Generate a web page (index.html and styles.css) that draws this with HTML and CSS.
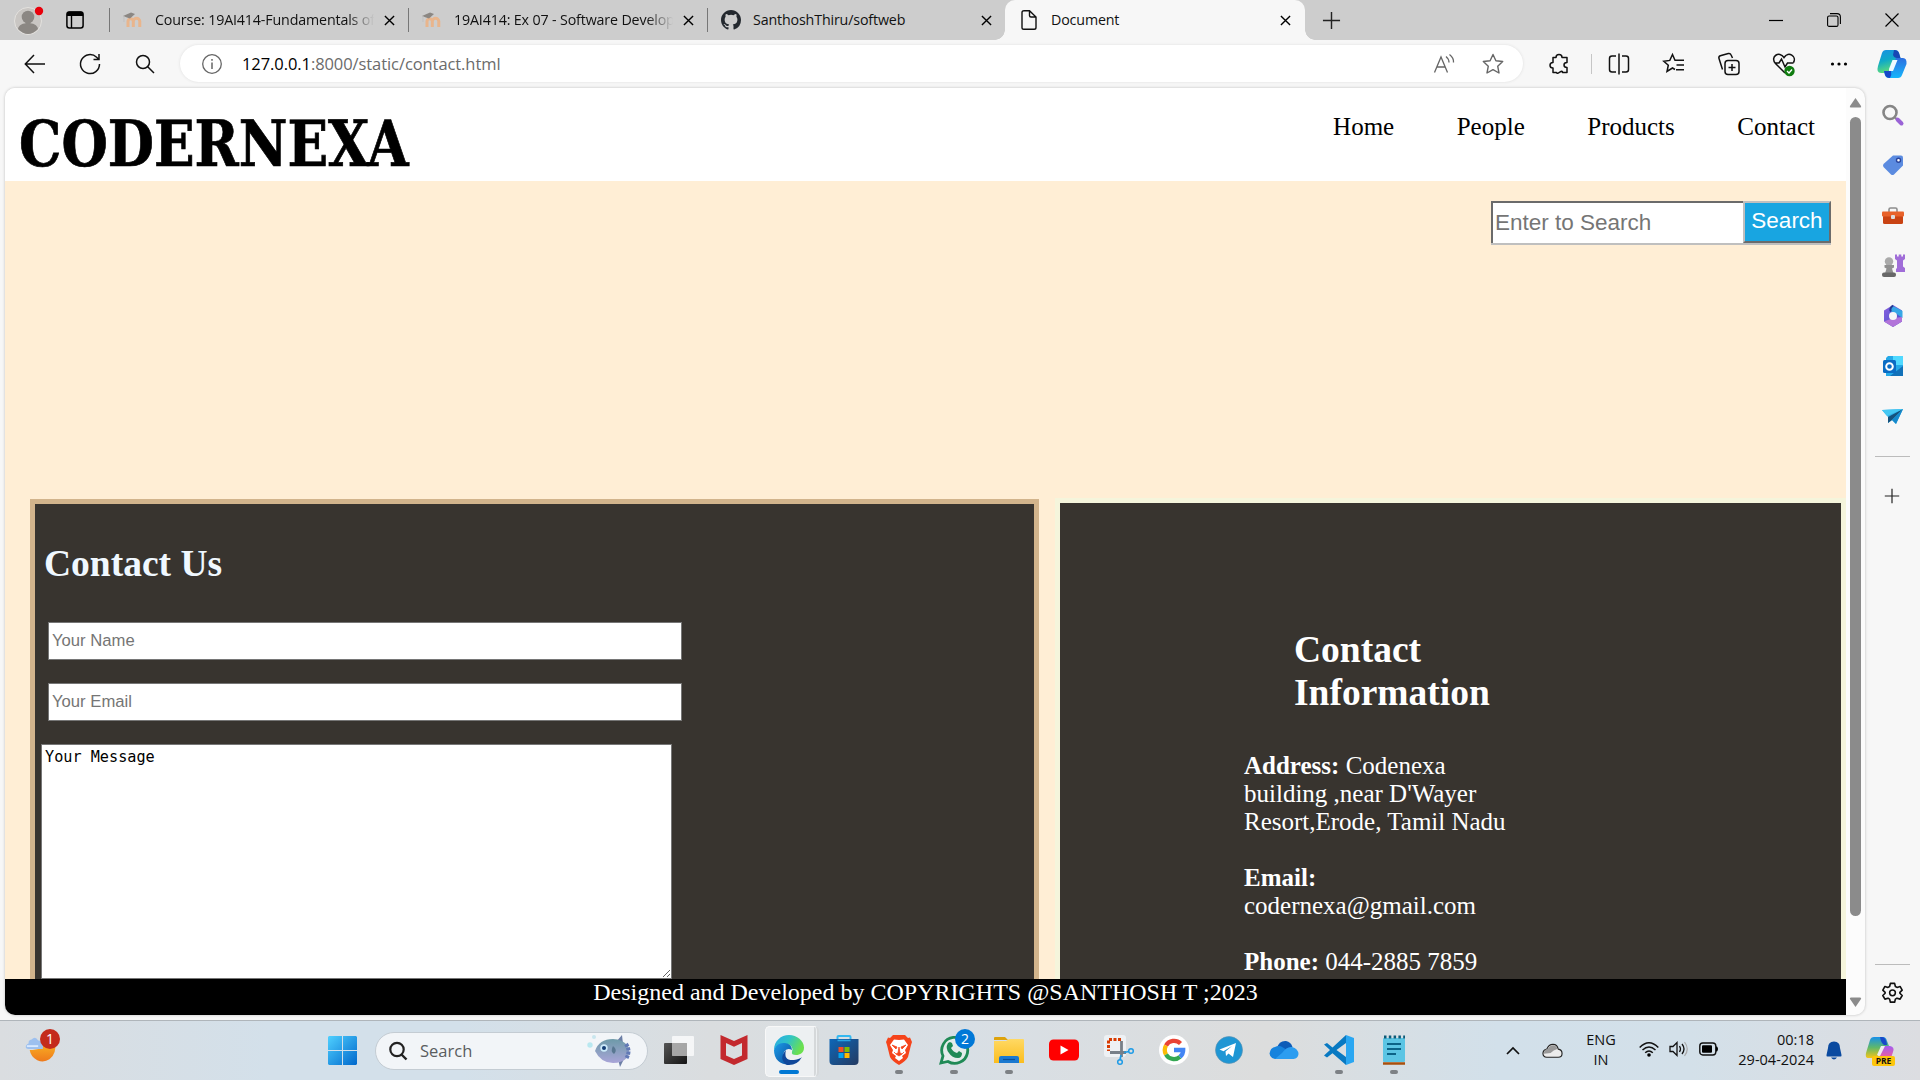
FILE: index.html
```html
<!DOCTYPE html>
<html lang="en">
<head>
<meta charset="utf-8">
<title>Document</title>
<link rel="stylesheet" href="styles.css">
</head>
<body>
<svg class="defs" width="0" height="0" aria-hidden="true">
  <defs>
    <linearGradient id="copilotA" x1="0" y1="0" x2=".3" y2="1"><stop offset="0" stop-color="#1a8fe3"/><stop offset=".5" stop-color="#0fa9c8"/><stop offset="1" stop-color="#5ddc7a"/></linearGradient>
    <linearGradient id="copilotB" x1="0" y1="0" x2="0" y2="1"><stop offset="0" stop-color="#2d6fe0"/><stop offset="1" stop-color="#16b6fb"/></linearGradient>
    <linearGradient id="win" x1="0" y1="0" x2="1" y2="1"><stop offset="0" stop-color="#4fd0ff"/><stop offset="1" stop-color="#0068cc"/></linearGradient>
    <linearGradient id="edgeTop" x1="0" y1="0" x2="1" y2=".4"><stop offset="0" stop-color="#2aa8e8"/><stop offset=".5" stop-color="#2fc3c8"/><stop offset="1" stop-color="#6be04f"/></linearGradient>
    <linearGradient id="edgeLow" x1="0" y1="0" x2="1" y2="1"><stop offset="0" stop-color="#1b9de8"/><stop offset="1" stop-color="#0c4a9c"/></linearGradient>
    <linearGradient id="store" x1="0" y1="0" x2="1" y2="1"><stop offset="0" stop-color="#0d67b8"/><stop offset="1" stop-color="#243a61"/></linearGradient>
    <linearGradient id="moon" x1="0" y1="0" x2="0" y2="1"><stop offset="0" stop-color="#fbb824"/><stop offset="1" stop-color="#ee7a1c"/></linearGradient>
    <linearGradient id="preA" x1="0" y1="0" x2="0" y2="1"><stop offset="0" stop-color="#1790ea"/><stop offset=".5" stop-color="#5fb86a"/><stop offset="1" stop-color="#f5c518"/></linearGradient>
    <linearGradient id="preB" x1="0" y1="0" x2="0" y2="1"><stop offset="0" stop-color="#a35cf0"/><stop offset="1" stop-color="#f0609a"/></linearGradient>
    <linearGradient id="fish" x1="0" y1="0" x2="0" y2="1"><stop offset="0" stop-color="#6d9aa8"/><stop offset="1" stop-color="#a9a5d8"/></linearGradient>
    <linearGradient id="folder" x1="0" y1="0" x2="0" y2="1"><stop offset="0" stop-color="#ffd964"/><stop offset="1" stop-color="#fbbd1e"/></linearGradient>
    <linearGradient id="dark" x1="0" y1="0" x2="1" y2="1"><stop offset="0" stop-color="#555"/><stop offset="1" stop-color="#151515"/></linearGradient>
    <linearGradient id="m365" x1="0" y1="0" x2="1" y2="1"><stop offset="0" stop-color="#8a5fe0"/><stop offset="1" stop-color="#3f53c8"/></linearGradient>
    <symbol id="x" viewBox="0 0 12 12"><path d="M1 1l10 10M11 1L1 11" fill="none" stroke="#000" stroke-width="1.5"/></symbol>
    <symbol id="moodle" viewBox="0 0 20 16"><path d="M5 15V9.500a2.600 2.600 0 0 1 5.300 0V15M10.300 15V9.500a3 3 0 0 1 6.500 0V15" fill="none" stroke="#e9b58c" stroke-width="3"/><path d="M0 4l8-3.500 4 1.500-5 4.500-3-1z" fill="#8b8783"/><path d="M1 4v6" stroke="#bbb" stroke-width=".7"/></symbol>
    <symbol id="plus" viewBox="0 0 20 20"><path d="M10 1v18M1 10h18" stroke="#222" stroke-width="1.500"/></symbol>
  </defs>
</svg>

<div class="tabstrip">
  <svg class="avatar" viewBox="0 0 32 32"><circle cx="14" cy="17" r="13.500" fill="#c9c6c3" stroke="#e4e2df"/><circle cx="14" cy="13" r="6.300" fill="#8b8783"/><path d="M4 25c1-8 19-8 20 0q-10 10-20 0" fill="#8b8783"/><circle cx="25" cy="7" r="4.200" fill="#e8000b"/></svg>
  <svg class="workspace" viewBox="0 0 18 18"><rect x=".9" y=".9" width="16.200" height="16.200" rx="2.500" fill="none" stroke="#000" stroke-width="1.500"/><path d="M1 2q0-1.500 2-1.500h12q2 0 2 1.500v3H1z"/><path d="M5.500 5v12" stroke="#000" stroke-width="1.400"/></svg>
  <div class="tab"><svg class="fav"><use href="#moodle"/></svg><span class="tab-title fade">Course: 19AI414-Fundamentals of</span><svg class="close"><use href="#x"/></svg></div>
  <div class="tab"><svg class="fav"><use href="#moodle"/></svg><span class="tab-title fade">19AI414: Ex 07 - Software Develop</span><svg class="close"><use href="#x"/></svg></div>
  <div class="tab"><svg class="fav" viewBox="0 0 16 16"><path fill="#24292f" d="M8 0C3.580 0 0 3.580 0 8c0 3.540 2.290 6.530 5.470 7.590.4.070.55-.17.55-.38 0-.19-.01-.82-.01-1.490-2.010.37-2.530-.49-2.690-.94-.09-.23-.48-.94-.82-1.130-.28-.15-.68-.52-.01-.53.63-.01 1.080.58 1.230.82.72 1.210 1.870.87 2.330.66.07-.52.28-.87.51-1.070-1.780-.2-3.640-.89-3.640-3.950 0-.87.31-1.590.82-2.150-.08-.2-.36-1.020.08-2.120 0 0 .67-.21 2.200.82a7.600 7.600 0 0 1 4 0c1.530-1.040 2.200-.82 2.200-.82.44 1.100.16 1.920.08 2.120.51.56.82 1.270.82 2.150 0 3.070-1.870 3.750-3.650 3.950.29.25.54.73.54 1.480 0 1.070-.01 1.930-.01 2.200 0 .21.15.46.55.38A8 8 0 0 0 16 8c0-4.420-3.580-8-8-8"/></svg><span class="tab-title">SanthoshThiru/softweb</span><svg class="close"><use href="#x"/></svg></div>
  <div class="tab active"><svg class="fav" viewBox="0 0 20 20"><path d="M4.500.7h6L17 7v10.500q0 1.800-1.800 1.800H4.800Q3 19.300 3 17.500v-15Q3 .7 4.800.7M10.500 1v4.500Q10.500 7 12 7h5" fill="none" stroke="#111" stroke-width="1.400"/></svg><span class="tab-title">Document</span><svg class="close"><use href="#x"/></svg></div>
  <svg class="newtab"><use href="#plus"/></svg>
  <div class="winctl">
    <svg viewBox="0 0 14 14"><path d="M0 7.500h14" stroke="#000" stroke-width="1.200"/></svg>
    <svg viewBox="0 0 14 14"><rect x=".6" y="3" width="10.400" height="10.400" rx="1.500" fill="none" stroke="#000" stroke-width="1.100"/><path d="M3 .6h7q3.400 0 3.400 3.400v7" fill="none" stroke="#000" stroke-width="1.100"/></svg>
    <svg viewBox="0 0 14 14"><path d="M.5.5l13 13M13.500.5l-13 13" stroke="#000" stroke-width="1.200"/></svg>
  </div>
</div>

<div class="toolbar">
  <div class="tools nav-tools">
    <svg viewBox="0 0 24 24"><path d="M22 12H2.500M11 3l-8.700 9 8.700 9" fill="none" stroke="#111" stroke-width="1.500"/></svg>
    <svg viewBox="0 0 24 24"><path d="M21.500 12A9.500 9.500 0 1 1 18.600 5.200L21 7.500M21 2v5.500h-5.500" fill="none" stroke="#111" stroke-width="1.500"/></svg>
    <svg viewBox="0 0 24 24"><circle cx="10" cy="10" r="6.500" fill="none" stroke="#111" stroke-width="1.500"/><path d="M14.700 14.700l6.300 6.300" stroke="#111" stroke-width="1.500"/></svg>
  </div>
  <div class="address">
    <svg class="ic" viewBox="0 0 24 24"><circle cx="12" cy="12" r="9.300" fill="none" stroke="#666" stroke-width="1.300"/><path d="M12 10.500v6.500M12 7v1.800" stroke="#666" stroke-width="1.500"/></svg>
    <span class="url"><b>127.0.0.1</b>:8000/static/contact.html</span>
    <svg class="ic" viewBox="0 0 24 24"><path d="M2.500 20.500L9 5l6.500 15.500M5 15h8M14 4.500q3 2.500 3 6M17.500 2.500q4.500 3.500 4 8" fill="none" stroke="#666" stroke-width="1.300"/></svg>
    <svg class="ic star" viewBox="0 0 24 24"><path d="M12 2.500l2.900 6.200 6.800.8-5 4.700 1.300 6.800-6-3.400L6 21l1.300-6.800-5-4.700 6.800-.8z" fill="none" stroke="#666" stroke-width="1.400" stroke-linejoin="round"/></svg>
  </div>
  <div class="tools ext">
    <svg viewBox="0 0 24 24"><path d="M8 5.500C8 1.500 14 1.500 14 5.500h5v5c-4 0-4 5 0 5v5h-4.500c0-4-5 3-6 0H5v-4.500C1 16 1 10.500 5 10.500v-5z" fill="none" stroke="#111" stroke-width="1.500" stroke-linejoin="round"/></svg>
    <i class="vline"></i>
    <svg viewBox="0 0 24 24"><path d="M9 4H5Q2.500 4 2.500 6.500v11Q2.500 20 5 20h4M15 4h4q2.500 0 2.500 2.500v11Q21.500 20 19 20h-4M12 1.500v21" fill="none" stroke="#111" stroke-width="1.500"/></svg>
    <svg viewBox="0 0 24 24"><path d="M13 17.500L10.500 16 5 19.500l1.300-6.300-4.500-4 6-.8L10.500 2.500 13 8.300h9M14.500 13H22M14 17.700h8" fill="none" stroke="#111" stroke-width="1.500"/></svg>
    <svg viewBox="0 0 24 24"><rect x="8" y="8.500" width="14" height="14" rx="3" fill="none" stroke="#111" stroke-width="1.500"/><path d="M15 12v7M11.500 15.500h7M5.500 17.500L2 6.500q-.7-2 1.300-2.700l8-2.300q2-.5 2.700 1.300L15.500 6" fill="none" stroke="#111" stroke-width="1.500"/></svg>
    <svg viewBox="0 0 24 24"><path d="M12 20L3.500 11.500c-6-7 4-13 8.500-6 4.500-7 13-1 9.500 5M3 11h4l2.500-4 3.500 8 2.500-4h6M12 20l1 1" fill="none" stroke="#111" stroke-width="1.500"/><circle cx="17.500" cy="19" r="5.200" fill="#107c10"/><path d="M15 19l2 2 3-3.500" stroke="#fff" fill="none" stroke-width="1.300"/></svg>
    <svg viewBox="0 0 24 24"><circle cx="5.500" cy="12" r="1.600"/><circle cx="12" cy="12" r="1.600"/><circle cx="18.500" cy="12" r="1.600"/></svg>
    <svg class="copilot" viewBox="0 0 30 30"><path d="M9 1h9q3 0 4 3l2 7h-6l-6 13H4Q-1 24 1 17L5 4q1-3 4-3" fill="url(#copilotA)"/><path d="M17 1q4 0 5 3l1.500 5H20q-3 0-4-3z" fill="#1748b5"/><path d="M21 29h-9q-3 0-4-3l-1-4h6l6-13h7q4 0 3.500 6L25 26q-1 3-4 3" fill="url(#copilotB)"/><path d="M7 22h7q1 4-1 7-4 0-5-3z" fill="#1748c8"/><path d="M12 20l3.500-9h5L16 22h-4z" fill="#eefaff"/></svg>
  </div>
</div>

<div class="middle">
  <div class="viewport">
    <div class="page">
      <header class="site-head">
        <h1>CODERNEXA</h1>
        <nav><a>Home</a><a>People</a><a>Products</a><a>Contact</a></nav>
      </header>
      <main>
        <div class="search-row"><div class="search-box"><input class="search-input" type="text" placeholder="Enter to Search"><button class="search-btn">Search</button></div></div>
        <div class="panels">
          <section class="form-panel">
            <h2>Contact Us</h2>
            <input class="field" type="text" placeholder="Your Name">
            <input class="field" type="text" placeholder="Your Email">
            <textarea class="message">Your Message</textarea>
          </section>
          <section class="info-panel">
            <h2>Contact<br>Information</h2>
            <p><strong>Address:</strong> Codenexa<br>building ,near D'Wayer<br>Resort,Erode, Tamil Nadu</p>
            <p><strong>Email:</strong><br>codernexa@gmail.com</p>
            <p><strong>Phone:</strong> 044-2885 7859</p>
          </section>
        </div>
      </main>
      <footer>Designed and Developed by COPYRIGHTS @SANTHOSH T ;2023</footer>
    </div>
    <div class="scrollbar">
      <svg width="13" height="10" viewBox="0 0 13 10"><path d="M6.500 0L12 8q.8 1.500-1 1.500H2Q.2 9.500 1 8z" fill="#8b8b8b"/></svg>
      <div class="thumb"></div>
      <svg width="13" height="10" viewBox="0 0 13 10"><path d="M6.500 10L12 2q.8-1.500-1-1.500H2Q.2.500 1 2z" fill="#8b8b8b"/></svg>
    </div>
  </div>
  <aside class="sidebar">
    <svg viewBox="0 0 24 24"><circle cx="9" cy="9.500" r="6.500" fill="none" stroke="#858585" stroke-width="2.600"/><path d="M14 14.500l2 2" stroke="#888" stroke-width="2"/><path d="M16.500 16.500l4 4" stroke="#9a63d6" stroke-width="4" stroke-linecap="round"/></svg>
    <svg viewBox="0 0 24 24"><path d="M12 2.500h8q2 0 2 2v8L13 21.500q-1.500 1.200-3 0L2.500 14q-1-1.500 0-3z" fill="#5b8be0"/><circle cx="17.500" cy="7.300" r="2" fill="#fff" stroke="#29449c" stroke-width="1.400"/></svg>
    <svg viewBox="0 0 24 24"><path d="M8 9V6.500Q8 5 9.500 5h5Q16 5 16 6.500V9" fill="none" stroke="#8d8d8d" stroke-width="1.600"/><rect x="2" y="12" width="20" height="9" rx="1.500" fill="#c94313"/><rect x="1" y="8.500" width="22" height="5" rx="1" fill="#e8622a"/><rect x="10" y="12" width="4" height="4" rx="1" fill="#ddd"/></svg>
    <svg viewBox="0 0 24 24"><path d="M14 .5h2v2h1.700v-2h2.600v2H22v-2h2v4.500l-2 1.500v6l2 1.500V18h-9v-3l1-1V6.500L14 5z" fill="#a06dd8"/><circle cx="8" cy="7.500" r="4.200" fill="#aaa"/><path d="M3.500 11h9.500v2.500l-2 1 1.500 5H4l1.500-5-2-1z" fill="#909090"/><rect x="1" y="18.500" width="14" height="4.500" rx="2" fill="#686868"/></svg>
    <svg viewBox="0 0 24 24"><path d="M12 1l9 5.500v11L12 23l-9-5.500v-11z" fill="url(#m365)"/><path d="M11 1.500L21.500 7v7L15 9.500 9 7z" fill="#37a7e6"/><path d="M3 17.500L12 14l9-1v4.500L12 23z" fill="#b274d9"/><path d="M12 1.500q-4 3.500-2 6" stroke="#253b91" stroke-width="2" fill="none"/><circle cx="12" cy="12" r="4" fill="#f7f7f7"/></svg>
    <svg viewBox="0 0 24 24"><path d="M7 2h13q2 0 2 2v18H5V4z" fill="#24a9e8"/><path d="M12 2h10v9H12z" fill="#50d9ff"/><path d="M22 12v10H9z" fill="#1271b8"/><rect x="2" y="6" width="13" height="13" rx="1.500" fill="#0a6cc4"/><circle cx="8.500" cy="12.500" r="3.300" fill="none" stroke="#fff" stroke-width="2"/></svg>
    <svg viewBox="0 0 24 24"><path d="M1 6l21-1-7 15-4-4-4 3v-6z" fill="#2caee8"/><path d="M22 5L7 13v6l4-3z" fill="#15527d"/><path d="M22 5L11 16l4 4z" fill="#1689cc"/><path d="M1 6l21-1L6 12z" fill="#45c8f3"/></svg>
    <i class="hline"></i>
    <svg class="side-plus" viewBox="0 0 20 20"><use href="#plus"/></svg>
    <div class="side-bottom"><i class="hline"></i>
    <svg class="gear" viewBox="0 0 24 24"><path d="M9.800 2.500h4.400l.8 3.200 1.700 1 3.200-1 2.200 3.800-2.400 2.300v1l2.400 2.300-2.200 3.800-3.200-1-1.700 1-.8 3.200H9.800L9 18.900l-1.700-1-3.200 1-2.200-3.800 2.400-2.300v-1L1.900 9.500l2.200-3.800 3.200 1 1.700-1z" fill="none" stroke="#111" stroke-width="1.700" stroke-linejoin="round"/><circle cx="12" cy="12.300" r="3" fill="none" stroke="#111" stroke-width="1.600"/></svg></div>
  </aside>
</div>

<div class="taskbar">
  <div class="weather"><svg viewBox="0 0 34 34"><path d="M5 19q8 1 14-3V9h13q2 14-6 20-6 4-13 1-7-4-8-11" fill="url(#moon)"/><path d="M4 18h15v-5q-1-4-5-4Q11 4 7 8 3 9 4 12q-4 2-3 5 1 1 3 1" fill="#9dc0ef"/><path d="M2 15h12" stroke="#d9e9ff" stroke-width="2"/></svg><span class="badge red">1</span></div>
  <svg class="start" viewBox="0 0 29 29"><path d="M1 0h13v14H0V1zM15 0h13l1 1v13H15zM0 15h14v14H1l-1-1zM15 15h14v13l-1 1H15z" fill="url(#win)"/></svg>
  <div class="tb-search">
    <svg viewBox="0 0 20 20"><circle cx="9" cy="8.500" r="6.700" fill="none" stroke="#222" stroke-width="2.200"/><path d="M13.500 13.500l5 5" stroke="#222" stroke-width="2.400"/></svg>
    <span>Search</span>
    <svg class="fish" viewBox="0 0 44 34"><path d="M29 8l6-7 1 9zM31 25l2 8 4-8z" fill="#6c7fa6"/><path d="M8 17q4-12 18-12 9 0 15 7 2 5 0 11-6 6-15 6-12 0-18-12" fill="url(#fish)"/><path d="M39 10q5 7 0 15" stroke="#6279b5" stroke-width="4" fill="none" stroke-dasharray="3 1"/><circle cx="17" cy="14" r="3.700" fill="#cceafa"/><circle cx="17" cy="14" r="2" fill="#143d73"/><path d="M26 12q-3 5 1 8 4-4-1-8" fill="#587791"/><circle cx="3" cy="11" r="2.700" fill="#b9e8f0"/><circle cx="7" cy="3" r="2" fill="#c9e6ee"/></svg>
  </div>
  <div class="apps">
    <div class="app"><svg viewBox="0 0 30 30"><rect x="0" y="8" width="23" height="21" rx="1" fill="url(#dark)"/><rect x="8" y="1" width="22" height="20" rx="1" fill="#fff" opacity=".72"/><rect x="8" y="8" width="15" height="13" fill="#999" opacity=".7"/></svg></div>
    <div class="app"><svg viewBox="0 0 30 30"><path d="M1.500 0L15 6 28.500 0v24L15 30 1.500 24zM7 8v12.500l8 3.500 8-3.500V8l-8 3.800z" fill="#c3292e" fill-rule="evenodd"/></svg></div>
    <div class="app current"><svg viewBox="0 0 30 30"><path d="M0 15C0 6 7 0 15 0s15 6 15 12.500C30 18 26 20 22 20q-5 0-4-3Q20 9 11 9 3 9 0 15" fill="url(#edgeTop)"/><path d="M0 15q3-8 11-7 7 1 7 7-5-3-8 2-3 8 6 12.900Q0 29 0 15" fill="url(#edgeLow)"/><path d="M12 15q-3 11 8 10 6-1 8-3-5 9-15 8-9-6-1-15" fill="#10489a"/></svg><i></i></div>
    <div class="app"><svg viewBox="0 0 30 30"><path d="M8.500 6V2q0-1 1-1h11q1 0 1 1v4" fill="none" stroke="#34b8f0" stroke-width="2"/><path d="M.5 4h29v22q0 4-4 4h-21q-4 0-4-4z" fill="url(#store)"/><path d="M8.500 5.500h13" stroke="#26a4e4" stroke-width="1.500"/><path fill="#f25022" d="M9.500 12h5v5h-5z"/><path fill="#7fba00" d="M15.500 12h5v5h-5z"/><path fill="#00a4ef" d="M9.500 18h5v5h-5z"/><path fill="#ffb900" d="M15.500 18h5v5h-5z"/></svg></div>
    <div class="app"><svg viewBox="0 0 30 30"><path d="M9 0h12l3 3 2-.5L28 7l-1 3-3 12q-2 4-9 8-7-4-9-8L3 10 2 7l2-4.500L6 3z" fill="#f5441b"/><path d="M15 5l5-.5 4 5.500-3 5 1 3-4 3 1 2-4 3-4-3 1-2-4-3 1-3-3-5 4-5.500z" fill="#fff"/><path d="M8 10l5 2-1 2zM22 10l-5 2 1 2zM15 12l1 6 2 1-3 2-3-2 2-1zM10 17l2 2M20 17l-2 2" fill="#f5441b" stroke="#f5441b" stroke-width=".8"/></svg><i></i></div>
    <div class="app"><svg viewBox="0 0 30 30"><path d="M2 28l2-7A13 13 0 1 1 9 26.500z" fill="#e3eceb" stroke="#1f8a56" stroke-width="2.800"/><path d="M9 8l2-1 2 1 1 3-2 2q2 4 6 5l2-2 3 2q0 5-4 5-6 0-9-5-4-5-1-10" fill="#1f8a56"/></svg><span class="badge blue">2</span><i></i></div>
    <div class="app"><svg viewBox="0 0 30 30"><path d="M0 3q0-1 1-1h10l3 3H0z" fill="#dda20c"/><path d="M0 6h12l3-2h14q1 0 1 1v23H0z" fill="url(#folder)"/><path d="M5 28v-5q0-2 2-2h16q2 0 2 2v5z" fill="#1b79d0"/><path d="M9 24.500h12" stroke="#0b4f98" stroke-width="1.200"/></svg><i></i></div>
    <div class="app"><svg viewBox="0 0 30 30"><rect x="0" y="4.500" width="30" height="21" rx="4.500" fill="#f00"/><path d="M11.500 10.500v9l8-4.500z" fill="#fff"/></svg></div>
    <div class="app"><svg viewBox="0 0 30 30"><rect width="22" height="22" rx="3" fill="#eef1f4"/><path d="M17 4.500H4.500V16" fill="none" stroke="#d83b01" stroke-width="3" stroke-dasharray="3 1.500"/><path d="M17.500 6v16M6 17.500h16" stroke="#777f88" stroke-width="2.800"/><circle cx="27" cy="16" r="2.300" fill="none" stroke="#1e9be6" stroke-width="1.500"/><circle cx="16" cy="27" r="2.300" fill="none" stroke="#1e9be6" stroke-width="1.500"/><path d="M20 17.500l5-1M17 20l-1 5" stroke="#1e9be6" stroke-width="1.700"/></svg></div>
    <div class="app"><svg viewBox="0 0 30 30"><circle cx="15" cy="15" r="15" fill="#fff"/><g fill="none" stroke-width="4.300"><path d="M7 10.500A9.200 9.200 0 0 1 21.500 8.500" stroke="#ea4335"/><path d="M7 10.500a9.200 9.200 0 0 0 0 9" stroke="#fbbc05"/><path d="M7 19.500a9.200 9.200 0 0 0 14 2.300" stroke="#34a853"/><path d="M15 15h9.200q0 4.200-3.200 6.800" stroke="#4285f4"/></g></svg></div>
    <div class="app"><svg viewBox="0 0 30 30"><circle cx="15" cy="15" r="13.500" fill="#1e96d4" stroke="#5a8fae" stroke-width=".6"/><path d="M5.500 14.500L22 8l-3 14-4.500-3.500L12 21l-.5-4.500L18 11l-8.500 5.300z" fill="#fff"/></svg></div>
    <div class="app"><svg viewBox="0 0 30 30"><path d="M8 13q2-7.500 9-7 5 1 6.500 6l-5 5z" fill="#0d5cb8"/><path d="M6 24q-5-1-5.500-5.500Q1 13 6 12q4-2 8 .5l7 4.500-10 7z" fill="#1683dd"/><path d="M13 18q5-7 10-6 6 1.500 6.500 7-.5 4.500-5 5H6z" fill="#2c9df0"/></svg></div>
    <div class="app"><svg viewBox="0 0 30 30"><path d="M22 0L8.500 12.500 3 8 0 9.500 6 15 0 20.500 3 22.500l5.500-4.300L22 30V22L12.500 15 22 8z" fill="#0879c2"/><path d="M22 0l8 3v24l-8 3z" fill="#2aa7f2"/></svg><i></i></div>
    <div class="app"><svg viewBox="0 0 30 30"><rect x="4" y="3" width="22" height="24" rx="1" fill="#5cc5e4"/><path d="M5 2h21" stroke="#0b5a78" stroke-width="3" stroke-dasharray="2.500 2.300"/><path d="M8 9h14M8 14h14M8 19h9" stroke="#0c6387" stroke-width="1.800"/><path d="M4 28.500h22" stroke="#a8500e" stroke-width="2.500"/></svg><i></i></div>
  </div>
  <div class="tray">
    <svg class="chev" viewBox="0 0 14 14"><path d="M1 10l6-6 6 6" fill="none" stroke="#111" stroke-width="1.700"/></svg>
    <svg class="cloud" viewBox="0 0 22 16"><path d="M5 14.500q-4-.5-4-4T5 6q2-5 6.500-5Q16 1 17 6q4 .5 4 4.500T17 14.500z" fill="#ececec" stroke="#222" stroke-width="1.200"/><path d="M2 11q0-5 4-5 2-4 6-4 4 1 4 4-4 1-7 4z" fill="#999"/></svg>
    <div class="lang">ENG<br>IN</div>
    <svg class="wifi" viewBox="0 0 20 16"><g fill="none" stroke="#111" stroke-width="1.500"><path d="M.7 6.500q9.300-9.500 18.600 0M3.500 9q6.500-6 13 0M6.200 11.800q3.800-3.500 7.600 0"/></g><circle cx="10" cy="14" r="1.800"/></svg>
    <svg class="vol" viewBox="0 0 20 16"><path d="M1 5.500h3l4-4v13l-4-4H1z" fill="none" stroke="#111" stroke-width="1.300"/><path d="M10.500 5q2 3 0 6M13 3q4 5 0 10" fill="none" stroke="#111" stroke-width="1.300"/><path d="M15.500 1q5.500 7 0 14" fill="none" stroke="#aaa" stroke-width="1.200"/></svg>
    <svg class="bat" viewBox="0 0 20 14"><rect x=".8" y="1" width="16" height="12" rx="3" fill="none" stroke="#111" stroke-width="1.400"/><rect x="3" y="3.200" width="10" height="7.600" rx="1"/><path d="M17 4.500h1q2 2.500 0 5h-1z"/></svg>
    <div class="clock">00:18<br>29-04-2024</div>
    <svg class="bell" viewBox="0 0 16 20"><path d="M8 .5q6 0 6 6.500l1.500 7q.3 1.500-1 1.500h-13q-1.300 0-1-1.500L2 7Q2 .5 8 .5M5 16.500h6q-3 4-6 0" fill="#0a4aa0"/></svg>
    <svg class="pre" viewBox="0 0 30 30"><path d="M9 1h9q3 0 4 4l2 5-8 1-4 11H3q-3 0-2-5L5 4q1-3 4-3" fill="url(#preA)"/><path d="M17 1q4 0 5 8h-3q-3-2-4-8z" fill="#1849c9"/><path d="M14 21l5-11h6q5 1 3 6l-2 6H13z" fill="url(#preB)"/><path d="M12 19l4-9h4l-5 10z" fill="#eee"/><rect x="7" y="20" width="23" height="10" rx="2" fill="#fdc60c"/><text x="18.500" y="28.100" text-anchor="middle" class="pre-label">PRE</text></svg>
  </div>
</div>
</body>
</html>
```
FILE: styles.css
```css
* { box-sizing: border-box; }
body { margin: 0; width: 1920px; height: 1080px; overflow: hidden; display: flex; flex-direction: column; background: #f7f7f7; font-family: "Open Sans", "Noto Sans", sans-serif; color: #111; }
svg { display: block; flex: none; overflow: visible; }
.defs { position: absolute; }

/* Tab strip */
.tabstrip { height: 40px; flex: none; display: flex; align-items: center; background: #cdcdcd; padding-left: 14px; }
.avatar { width: 32px; height: 32px; margin-top: -1px; }
.workspace { width: 18px; height: 18px; margin: 0 25px 0 20px; }
.tab { width: 299px; height: 40px; flex: none; display: flex; align-items: center; padding: 0 13px 1px 14px; background: linear-gradient(#777, #777) 0 8px / 1px 24px no-repeat; }
.tab:nth-of-type(3) { width: 298px; }
.fav { width: 20px; height: 20px; margin-right: 12px; }
.tab-title { flex: 1; font-size: 14.250px; letter-spacing: -.15px; line-height: 20px; white-space: nowrap; overflow: hidden; color: #111; }
.fade { -webkit-mask-image: linear-gradient(to right, #000 88%, transparent); mask-image: linear-gradient(to right, #000 88%, transparent); }
.close { width: 11px; height: 11px; margin: 2px 0 0 10px; }
.active { width: 300px; background: #f7f7f7; border-radius: 10px 10px 0 0; padding-left: 14px; padding-right: 14px; position: relative; }
.active::before, .active::after { content: ""; position: absolute; bottom: 0; width: 10px; height: 10px; }
.active::before { left: -10px; background: radial-gradient(circle at 0 0, transparent 9.500px, #f7f7f7 10px); }
.active::after { right: -10px; background: radial-gradient(circle at 100% 0, transparent 9.500px, #f7f7f7 10px); }
.newtab { width: 19px; height: 19px; margin-left: 17px; }
.winctl { margin-left: auto; display: flex; gap: 44px; padding-right: 21px; }
.winctl svg { width: 14px; height: 14px; }

/* Toolbar */
.toolbar { height: 47px; margin-bottom: 1px; flex: none; display: flex; align-items: center; padding-left: 23px; }
.tools { display: flex; align-items: center; }
.tools svg { width: 24px; height: 24px; }
.nav-tools { gap: 31px; }
.address { width: 1343px; height: 37px; margin-left: 23px; border-radius: 19px; background: #fff; display: flex; align-items: center; padding: 0 18px 0 20px; box-shadow: 0 0 3px #ddd; }
.ic { width: 24px; height: 24px; }
.star { margin-left: 25px; }
.url { flex: 1; margin: -1px 0 0 18px; font-size: 16.500px; letter-spacing: -.08px; color: #6b6b6b; }
.url b { font-weight: 400; color: #000; }
.ext { padding-left: 25px; gap: 31px; }
.vline { width: 1px; height: 20px; background: #c6c6c6; margin: 0 -16px 0 -12px; }
.tools .copilot { width: 30px; height: 30px; margin-left: -5px; }

/* Browser body */
.middle { height: 932px; flex: none; display: flex; }
.viewport { width: 1860px; height: 927px; margin-left: 5px; border-radius: 10px; overflow: hidden; display: flex; background: #fcfcfc; box-shadow: 0 0 3px #bbb; }
.page { width: 1841px; height: 927px; display: flex; flex-direction: column; font-family: "Liberation Serif", serif; font-size: 25px; line-height: 28px; color: #000; }
.scrollbar { width: 19px; display: flex; flex-direction: column; align-items: center; padding: 10px 0 8px; }
.thumb { width: 11px; height: 799px; margin: 9px 0 auto; border-radius: 6px; background: #8b8b8b; }
.site-head { height: 93px; flex: none; display: flex; justify-content: space-between; background: #fff; padding: 25px 31px 0 14px; }
.site-head h1 { margin: -1px 0 0; font: bold 64px/64px "DejaVu Serif Condensed", "DejaVu Serif", serif; font-stretch: condensed; transform-origin: 0 0; transform: scaleX(.925); height: 60px; -webkit-text-stroke: .7px #000; }
.site-head nav { display: flex; gap: 62.500px; }
main { flex: 1; min-height: 0; overflow: hidden; background: #ffeed5; }
.search-row { height: 317px; display: flex; justify-content: flex-end; align-items: flex-start; padding: 20px 15px 0 0; }
.search-box { width: 340px; height: 44px; display: flex; align-items: flex-start; background: #fff; border-bottom: 2px solid #bfbfbf; }
.search-input { width: 252px; height: 42px; border: solid #6b6b6b; border-width: 2px 0 0 2px; border-radius: 0; margin: 0; padding: 0 3px 1px 2px; font: 22.500px "Liberation Sans", sans-serif; background: #fff; }
::placeholder { color: #757575; opacity: 1; }
.search-btn { width: 88px; height: 42px; border: 2px solid; border-color: #bfbfbf #6b6b6b #6b6b6b #bfbfbf; border-radius: 0; margin: 0; padding: 0 0 2px; font: 22.500px "Liberation Sans", sans-serif; background: #18a5e1; color: #fff; }
.panels { display: flex; gap: 16px; padding-left: 25px; align-items: flex-start; }
.form-panel, .info-panel { height: 560px; background: #38342f; }
.form-panel { width: 1009px; margin-top: 1px; border: 5px solid #d2b48c; padding: 38px 0 0 6px; display: flex; flex-direction: column; align-items: flex-start; }
h2 { margin: 0; font-size: 37.500px; line-height: 43px; }
.form-panel h2 { color: #f0f8ff; margin: 0 0 37px 3px; }
.field { width: 634px; height: 38px; flex: none; border: 1px solid #767676; border-radius: 0; margin: 0 0 23px 7px; padding: 0 3px; font: 16.667px "Liberation Sans", sans-serif; background: #fff; }
.message { width: 631px; height: 235px; flex: none; border: 1px solid #767676; border-radius: 0; margin: 0; padding: 3px; font: 15.200px/18px "DejaVu Sans Mono", monospace; background: #fff; color: #000; resize: both; }
.info-panel { width: 791px; border: 5px solid #f5f5dc; padding: 125px 0 0 184px; color: #fff; }
.info-panel h2 { margin: 0 0 38px 50px; }
.info-panel p { margin: 0 0 28px; }
footer { height: 36px; flex: none; background: #000; color: #fff; text-align: center; font-size: 24px; line-height: 27px; }

/* Edge sidebar */
.sidebar { width: 55px; display: flex; flex-direction: column; align-items: center; padding-top: 15px; }
.sidebar > svg { width: 24px; height: 24px; margin-bottom: 26.200px; }
.hline { width: 35px; height: 1px; flex: none; background: #bcbcbc; }
.sidebar > .hline { margin-top: 2px; }
.sidebar > .side-plus { width: 16px; height: 16px; margin: 31px 1px 0 0; }
.side-bottom { margin-top: auto; display: flex; flex-direction: column; align-items: center; padding-bottom: 16px; }
.gear { width: 23px; height: 23px; margin-top: 16px; }

/* Taskbar */
.taskbar { height: 60px; flex: none; border-top: 1px solid #afb5ba; display: flex; align-items: center; background: linear-gradient(90deg, #dadde0 0, #d3e0ea 14%, #d3e0ea 24%, #dadddf 37%, #d8dfe5 50%, #dcdddd 66%, #d2e0ea 78%, #d3e0e9 88%, #dcdde1 100%); }
.weather { position: relative; width: 34px; margin-left: 25px; }
.weather svg { width: 32px; height: 32px; margin-top: -6px; }
.badge { position: absolute; width: 20px; height: 20px; border-radius: 50%; color: #fff; font-size: 14px; line-height: 20px; text-align: center; }
.red { background: #c42b1c; left: 15px; top: -9px; }
.blue { background: #0078d7; right: 6px; top: 8px; }
.start { width: 29px; height: 29px; margin-left: 269px; }
.tb-search { width: 273px; height: 38px; margin-left: 18px; border: 1px solid #c4ccd3; border-radius: 19px; background: #f2f5f8; display: flex; align-items: center; padding: 0 16px 0 12px; }
.tb-search > svg { width: 20px; height: 20px; }
.tb-search span { flex: 1; margin-left: 12px; font-size: 16.500px; color: #5a5d60; }
.tb-search .fish { width: 44px; height: 34px; }
.apps { display: flex; margin-left: 3px; }
.app { position: relative; width: 55px; height: 59px; display: grid; place-items: center; }
.app > svg { width: 30px; height: 30px; position: relative; margin-top: -1px; }
.app > i { position: absolute; left: 24px; bottom: 6px; width: 8px; height: 4px; border-radius: 2px; background: #7d8185; }
.current::before { content: ""; position: absolute; left: 4px; top: 5px; width: 48px; height: 49px; border-radius: 5px; background: #edf0f2; border: 1px solid #f8f8f8; border-right: 5px double #d5d8da; }
.current > i { left: 18px; width: 20px; background: #0078d4; }
.tray { display: flex; align-items: center; margin-left: auto; }
.chev { width: 14px; height: 14px; margin-right: 22px; }
.cloud { width: 21px; height: 16px; }
.lang { width: 76px; text-align: center; font-size: 14.500px; line-height: 20px; margin-top: -1px; }
.wifi { width: 20px; height: 16px; margin: -3px 10px 0 0; }
.vol { width: 20px; height: 16px; margin: -3px 10px 0 0; }
.bat { width: 20px; height: 14px; margin-top: -3px; }
.clock { width: 98px; text-align: right; font-size: 14.500px; line-height: 20px; margin: -2px 1px 0 -3px; }
.bell { width: 16px; height: 20px; margin: 0 23px 0 11px; }
.pre { width: 30px; height: 30px; margin-right: 25px; }
.pre-label { font: bold 8.500px "Open Sans", sans-serif; fill: #111; }
```
